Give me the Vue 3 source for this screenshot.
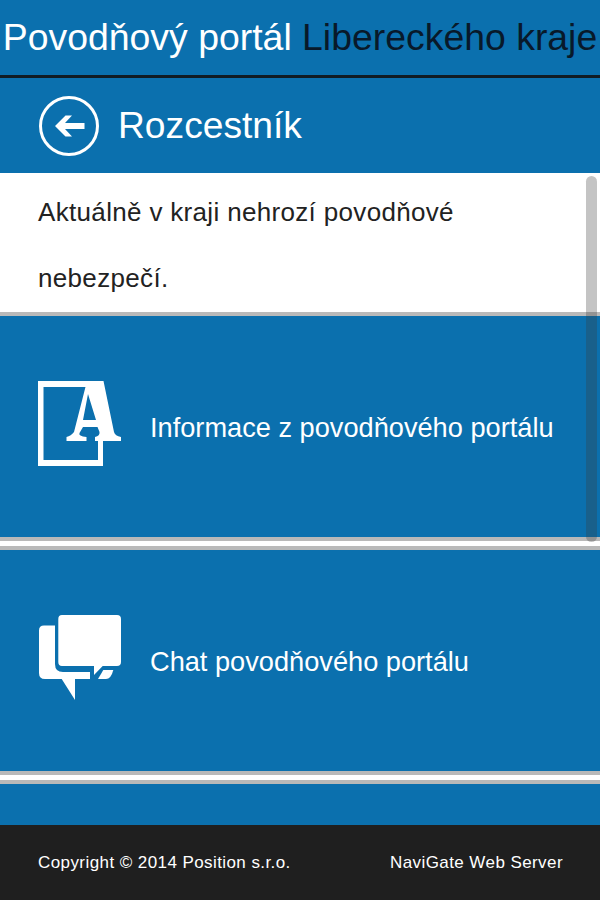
<script setup>
const links = [
  { label: 'Informace z povodňového portálu', icon: 'font' },
  { label: 'Chat povodňového portálu', icon: 'chat' }
]
</script>

<template>
  <div class="page">
    <header class="top">
      <span class="light">Povodňový portál</span>&nbsp;<span class="dark">Libereckého kraje</span>
    </header>
    <div class="nav">
      <svg class="back" width="60" height="60" viewBox="0 0 60 60">
        <circle cx="30" cy="30" r="28.500" fill="none" stroke="#fff" stroke-width="3" />
        <path d="M45.500 27H26L33 19.500H26.500L16 30L26.500 40.500H33L26 33H45.500Z" fill="#fff" />
      </svg>
      <span class="nav-title">Rozcestník</span>
    </div>
    <main class="content">
      <div class="scrollbar"></div>
      <section class="notice">Aktuálně v kraji nehrozí povodňové nebezpečí.</section>
      <a v-for="link in links" :key="link.label" class="item">
        <span class="icon">
          <svg v-if="link.icon === 'font'" width="84" height="86" viewBox="38 381 84 86">
            <path d="M38 381H88V387H43.500V460H98V440H103V466H38Z" fill="#fff" />
            <path fill-rule="evenodd" fill="#fff" d="M87 381H103.500L114 432Q115 436 121 437V441H95V437Q100 436 99.500 432L97.500 427H83L79.500 433Q78 436 86.500 437V441H66.500V437Q71 436 74 432ZM83 420H96L88 394Z" />
          </svg>
          <svg v-else width="84" height="86" viewBox="38 615 84 86">
            <path d="M44 625.500H55V664Q55 672 63 672H90V679H75V700L61.700 679H45Q39 679 39 673V630.500Q39 625.500 44 625.500Z" fill="#fff" />
            <path d="M62 615H117Q121 615 121 619V662Q121 666 117 666H102.700L94 675V666H62Q58.300 666 58.300 662V619Q58.300 615 62 615Z" fill="#fff" />
            <path d="M103.300 670H113.300Q111 679 106 679H98Z" fill="#fff" />
          </svg>
        </span>
        <span class="label">{{ link.label }}</span>
      </a>
      <div class="rest"></div>
    </main>
    <footer class="foot">
      <span>Copyright © 2014 Position s.r.o.</span>
      <span>NaviGate Web Server</span>
    </footer>
  </div>
</template>

<style scoped>
.page {
  width: 600px;
  height: 900px;
  display: flex;
  flex-direction: column;
  overflow: hidden;
  background: #0b70ae;
  font-family: "Liberation Sans", Arial, sans-serif;
}
.top {
  height: 75px;
  flex: none;
  border-bottom: 3px solid #111c24;
  display: flex;
  align-items: center;
  justify-content: center;
  font-size: 37.4px;
  white-space: nowrap;
}
.light { color: #fff; }
.dark { color: #08192a; }
.nav {
  height: 95px;
  flex: none;
  display: flex;
  align-items: center;
  gap: 19px;
  padding-left: 39px;
  color: #fff;
  font-size: 37.2px;
}
.back { flex: none; }
.content {
  position: relative;
  flex: 1;
  min-height: 0;
  overflow: hidden;
  background: #fff;
}
.scrollbar {
  position: absolute;
  top: 3px;
  right: 3px;
  width: 11px;
  height: 366px;
  border-radius: 6px;
  background: rgba(60, 60, 60, 0.3);
}
.notice {
  height: 139px;
  box-sizing: border-box;
  padding: 6px 120px 0 38px;
  color: #222;
  font-size: 26px;
  letter-spacing: 0.33px;
  line-height: 66px;
}
.item {
  height: 229px;
  box-sizing: border-box;
  margin-bottom: 5px;
  display: flex;
  align-items: center;
  gap: 28px;
  padding-left: 38px;
  background: #0b70ae;
  border-top: 4px solid #b9b9b9;
  border-bottom: 4px solid #b9b9b9;
  color: #fff;
  font-size: 27.2px;
}
.icon { display: flex; flex: none; margin-bottom: 6px; }
.label { margin-top: 3px; }
.rest {
  height: 60px;
  background: #0b70ae;
  border-top: 4px solid #b9b9b9;
}
.foot {
  height: 75px;
  flex: none;
  box-sizing: border-box;
  display: flex;
  align-items: center;
  justify-content: space-between;
  padding: 0 37px 0 38px;
  background: #1f1f1f;
  color: #fff;
  font-size: 17px;
  letter-spacing: 0.42px;
}
</style>
